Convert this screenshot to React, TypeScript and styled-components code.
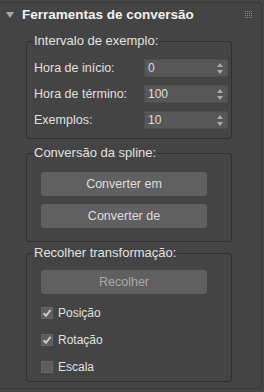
import React from "react";
import styled, { createGlobalStyle } from "styled-components";

const GlobalStyle = createGlobalStyle`
  html, body {
    margin: 0;
    padding: 0;
    background: #444444;
    font-family: "Liberation Sans", Arial, sans-serif;
  }
`;

const Spinner: React.FC<{ value: string }> = ({ value }) => (
  <SpinBox>
    <span>{value}</span>
    <svg width="6" height="11" viewBox="0 0 6 11">
      <path d="M3 0 L6 4 L0 4 Z" fill="#a9a9a9" />
      <path d="M3 11 L6 7 L0 7 Z" fill="#a9a9a9" />
    </svg>
  </SpinBox>
);

const Check: React.FC<{ checked?: boolean; label: string }> = ({
  checked,
  label,
}) => (
  <CheckRow>
    <Box>
      {checked && (
        <svg width="10" height="10" viewBox="0 0 10 10">
          <path
            d="M1.5 5.2 L4 7.8 L8.6 1.8"
            stroke="#c9c9c9"
            strokeWidth="2"
            fill="none"
          />
        </svg>
      )}
    </Box>
    <span>{label}</span>
  </CheckRow>
);

const App: React.FC = () => {
  return (
    <>
      <GlobalStyle />
      <Rollout>
        {/* Header */}
        <Header>
          <svg width="8" height="6" viewBox="0 0 8 6">
            <path d="M0 0 L8 0 L4 6 Z" fill="#a8a8a8" />
          </svg>
          <Title>Ferramentas de conversão</Title>
          <Grip>
            {Array.from({ length: 16 }).map((_, i) => (
              <i key={i} />
            ))}
          </Grip>
        </Header>

        <Body>
          {/* Intervalo */}
          <Group $top={0} $pt={11} $pb={9}>
            <Legend>Intervalo de exemplo:</Legend>
            <Rows>
              <Row>
                <Label>Hora de início:</Label>
                <Spinner value="0" />
              </Row>
              <Row>
                <Label>Hora de término:</Label>
                <Spinner value="100" />
              </Row>
              <Row>
                <Label>Exemplos:</Label>
                <Spinner value="10" />
              </Row>
            </Rows>
          </Group>

          {/* Spline */}
          <Group $top={7} $pt={12} $pb={13}>
            <Legend>Conversão da spline:</Legend>
            <Buttons>
              <Button>Converter em</Button>
              <Button>Converter de</Button>
            </Buttons>
          </Group>

          {/* Recolher */}
          <Group $top={4} $pt={10} $pb={8}>
            <Legend>Recolher transformação:</Legend>
            <Buttons>
              <Button $disabled>Recolher</Button>
            </Buttons>
            <Checks>
              <Check checked label="Posição" />
              <Check checked label="Rotação" />
              <Check label="Escala" />
            </Checks>
          </Group>
        </Body>
      </Rollout>
    </>
  );
};

const Rollout = styled.div`
  margin-top: 2px;
  width: 262px;
  height: 387px;
  box-sizing: border-box;
  border: 1px solid #363636;
  border-left: none;
  border-radius: 0 5px 5px 0;
  background: #444444;
`;

const Header = styled.div`
  display: flex;
  align-items: center;
  height: 22px;
  padding-left: 6px;

  svg {
    margin-top: 1px;
    margin-right: 8px;
  }
`;

const Title = styled.span`
  flex: 1;
  font-size: 13.5px;
  font-weight: bold;
  color: #f2f2f2;
`;

const Grip = styled.div`
  display: grid;
  grid-template-columns: repeat(4, 1px);
  grid-auto-rows: 1px;
  gap: 1px;
  margin-right: 9px;
  margin-top: 1px;

  i {
    display: block;
    width: 1px;
    height: 1px;
    background: #8a8a8a;
  }
`;

const Body = styled.div`
  padding: 9px 0 0 26px;
  width: 206px;
`;

const Group = styled.fieldset<{ $top: number; $pt: number; $pb: number }>`
  margin: ${(p) => p.$top}px 0 0 0;
  padding: ${(p) => p.$pt}px 3px ${(p) => p.$pb}px 7px;
  border: 1px solid #2f2f2f;
  border-radius: 3px;
  min-width: 0;
`;

const Legend = styled.legend`
  padding: 0 1px;
  margin-left: -1px;
  font-size: 13px;
  line-height: 14px;
  color: #e2e2e2;
`;

const Rows = styled.div`
  display: flex;
  flex-direction: column;
  gap: 8px;
`;

const Row = styled.div`
  display: flex;
  align-items: center;
  justify-content: space-between;
  height: 18px;
`;

const Label = styled.span`
  font-size: 12.5px;
  color: #e0e0e0;
`;

const SpinBox = styled.div`
  display: flex;
  align-items: center;
  justify-content: space-between;
  box-sizing: border-box;
  width: 84px;
  height: 18px;
  padding: 0 4px 0 3px;
  background: #575757;
  border: 1px solid #4d4d4d;
  font-size: 12px;
  color: #dddddd;
`;

const Buttons = styled.div`
  display: flex;
  flex-direction: column;
  gap: 8px;
  padding-left: 7px;
`;

const Button = styled.div<{ $disabled?: boolean }>`
  display: flex;
  align-items: center;
  justify-content: center;
  width: 166px;
  height: 24px;
  background: #606060;
  border-radius: 3px;
  font-size: 12.5px;
  color: ${(p) => (p.$disabled ? "#a9a9a9" : "#dedede")};
`;

const Checks = styled.div`
  display: flex;
  flex-direction: column;
  gap: 15px;
  padding: 13px 0 0 7px;
`;

const CheckRow = styled.div`
  display: flex;
  align-items: center;
  gap: 5px;
  height: 12px;
  font-size: 12px;
  color: #e0e0e0;
`;

const Box = styled.div`
  display: flex;
  align-items: center;
  justify-content: center;
  box-sizing: border-box;
  width: 12px;
  height: 12px;
  background: #5c5c5c;
  border: 1px solid #666666;
`;

export default App;
